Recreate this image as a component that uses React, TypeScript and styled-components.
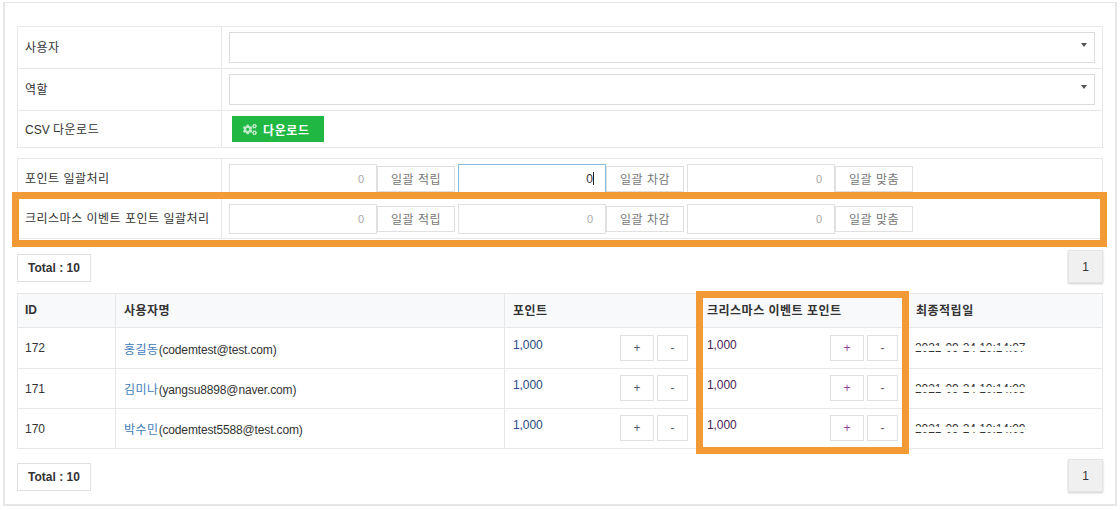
import React from "react";
import styled, { createGlobalStyle } from "styled-components";
import { FaCogs } from "react-icons/fa";

const Global = createGlobalStyle`
  * { box-sizing: border-box; }
  html, body { margin: 0; padding: 0; background: #fff; }
  body {
    font-family: "Liberation Sans", "Noto Sans CJK KR", sans-serif;
    font-size: 12px;
    color: #333;
  }
`;

const Card = styled.div`
  width: 1114px;
  height: 504px;
  margin: 2px 0 0 3px;
  padding: 23px 12px 0 12px;
  border: 2px solid #e6e6e6;
  border-width: 1px 2px 2px 2px;
  background: #fff;
`;

const Ko = styled.span`
  letter-spacing: 0.5px;
`;

const Section = styled.div`
  position: relative;
`;

const GridTable = styled.table`
  width: 1086px;
  border-collapse: collapse;
  table-layout: fixed;
  border: 1px solid #e2e2e2;
  & td, & th { border: 1px solid #e8e8e8; }
`;

const FilterTable = styled(GridTable)`
  margin-bottom: 10px;
`;

const LabelCell = styled.td<{ $height: number }>`
  width: 204px;
  height: ${(p) => p.$height}px;
  padding: 0 7px 2px;
  color: #333;
`;

const ValueCell = styled.td`
  padding: 0 7px;
`;

const SelectBox = styled.div`
  display: flex;
  justify-content: flex-end;
  align-items: center;
  height: 31px;
  padding: 0 7px 6px 0;
  border: 1px solid #dcdcdc;
  background: #fff;
`;

const Caret = styled.i`
  width: 0;
  height: 0;
  border-left: 3px solid transparent;
  border-right: 3px solid transparent;
  border-top: 4px solid #555;
`;

const DownloadButton = styled.button`
  display: flex;
  align-items: center;
  gap: 6px;
  width: 92px;
  height: 26px;
  margin: 0 0 0 3px;
  padding: 0 0 0 11px;
  border: 0;
  background: #20b843;
  color: #fff;
  font: bold 12px "Liberation Sans", "Noto Sans CJK KR", sans-serif;
  letter-spacing: 0.6px;
  & svg { width: 14px; height: 13px; color: #bfe9c9; }
`;

const BulkRow = styled.div`
  display: flex;
  align-items: center;
`;

const BulkGroup = styled.div`
  display: flex;
  align-items: center;
  margin-right: 3px;
`;

const NumberBox = styled.div<{ $focused?: boolean }>`
  display: flex;
  align-items: center;
  justify-content: flex-end;
  width: 148px;
  height: 30px;
  padding-right: ${(p) => (p.$focused ? 11 : 12)}px;
  border: 1px solid ${(p) => (p.$focused ? "#8dbbdd" : "#e0e0e0")};
  color: ${(p) => (p.$focused ? "#333" : "#aaa")};
  font-size: ${(p) => (p.$focused ? 12 : 11)}px;
`;

const TextCaret = styled.i`
  width: 1px;
  height: 13px;
  background: #222;
`;

const BulkButton = styled.button`
  width: 78px;
  height: 26px;
  padding: 0;
  border: 1px solid #e0e0e0;
  background: #fff;
  color: #777;
  font: 12px "Liberation Sans", "Noto Sans CJK KR", sans-serif;
  letter-spacing: 0.5px;
`;

const BulkHighlight = styled.div`
  position: absolute;
  left: -5px;
  top: 34px;
  width: 1095px;
  height: 55px;
  border: 7px solid #f29a36;
  pointer-events: none;
`;

const ColumnHighlight = styled.div`
  position: absolute;
  left: 679px;
  top: -2px;
  width: 213px;
  height: 163px;
  border: 7px solid #f29a36;
  pointer-events: none;
`;

const Bar = styled.div<{ $inset?: number }>`
  display: flex;
  justify-content: space-between;
  align-items: flex-start;
  width: 1086px;
  height: 54px;
  padding-top: ${(p) => p.$inset ?? 0}px;
`;

const TotalBadge = styled.div`
  display: flex;
  align-items: center;
  justify-content: center;
  width: 74px;
  height: 28px;
  margin-top: 14px;
  border: 1px solid #e0e0e0;
  font-weight: bold;
  color: #333;
`;

const PageButton = styled.button`
  width: 35px;
  height: 33px;
  margin-top: 10px;
  padding: 0;
  border: 1px solid #e4e4e4;
  background: #f0f0f0;
  box-shadow: 0 1px 2px rgba(0, 0, 0, 0.2);
  color: #333;
  font: 12px "Liberation Sans", sans-serif;
`;

const HeadCell = styled.th<{ $width?: number; $flush?: boolean }>`
  ${(p) => (p.$width ? `width: ${p.$width}px;` : "")}
  height: 34px;
  padding: 0 7px 2px ${(p) => (p.$flush ? 7 : 8)}px;
  background: #f8f9fb;
  color: #333;
  font-size: 12px;
  font-weight: bold;
  text-align: left;
`;

const Cell = styled.td<{ $inset?: number }>`
  padding: 0 7px 0 ${(p) => p.$inset ?? 7}px;
  color: #333;
`;

const Row = styled.tr`
  height: 40px;
  &:first-child { height: 41px; }
  &:first-child > td > div { padding-top: 1px; }
`;

const PointCell = styled.td<{ $end: number }>`
  padding: 0 ${(p) => p.$end}px 0 8px;
  vertical-align: top;
`;

const PointInner = styled.div`
  display: flex;
  justify-content: space-between;
  align-items: flex-start;
  padding-top: 0;
  margin-top: 6px;
`;

const Amount = styled.span<{ $event?: boolean }>`
  line-height: 20px;
  letter-spacing: -0.1px;
  color: ${(p) => (p.$event ? "#4a1a55" : "#1f4a80")};
`;

const StepGroup = styled.div`
  display: flex;
  gap: 3px;
`;

const StepButton = styled.button<{ $wide?: boolean; $event?: boolean }>`
  width: ${(p) => (p.$wide ? 34 : 31)}px;
  height: 26px;
  padding: 0;
  border: 1px solid #e0e0e0;
  background: #fff;
  color: ${(p) => (p.$event ? "#8f3fa0" : "#555a66")};
  font: 12px "Liberation Sans", sans-serif;
`;

const UserLink = styled.a`
  color: #3f7cb8;
  letter-spacing: 0.5px;
  text-decoration: none;
`;

const Email = styled.span`
  letter-spacing: -0.15px;
`;

const MaskedDate = styled.span`
  position: relative;
  display: inline-block;
  letter-spacing: -0.05px;
  &::after {
    content: "";
    position: absolute;
    left: 0;
    right: 0;
    top: 5px;
    height: 5px;
    background: #fff;
  }
`;

const bulkLabels = ["포인트 일괄처리", "크리스마스 이벤트 포인트 일괄처리"];

const users = [
  { id: 172, name: "홍길동", email: "(codemtest@test.com)", date: "2021-09-24 10:14:07" },
  { id: 171, name: "김미나", email: "(yangsu8898@naver.com)", date: "2021-09-24 10:14:08" },
  { id: 170, name: "박수민", email: "(codemtest5588@test.com)", date: "2021-09-24 10:14:09" },
];

function Points({ event }: { event?: boolean }) {
  return (
    <PointInner>
      <Amount $event={event}>1,000</Amount>
      <StepGroup>
        <StepButton $wide $event={event}>+</StepButton>
        <StepButton>-</StepButton>
      </StepGroup>
    </PointInner>
  );
}

export default function App() {
  return (
    <>
      <Global />
      <Card>
        <FilterTable>
          <tbody>
            <tr>
              <LabelCell $height={42}><Ko>사용자</Ko></LabelCell>
              <ValueCell><SelectBox><Caret /></SelectBox></ValueCell>
            </tr>
            <tr>
              <LabelCell $height={42}><Ko>역할</Ko></LabelCell>
              <ValueCell><SelectBox><Caret /></SelectBox></ValueCell>
            </tr>
            <tr>
              <LabelCell $height={37}>CSV <Ko>다운로드</Ko></LabelCell>
              <ValueCell>
                <DownloadButton><FaCogs />다운로드</DownloadButton>
              </ValueCell>
            </tr>
          </tbody>
        </FilterTable>

        <Section>
          <GridTable>
            <tbody>
              {bulkLabels.map((label, row) => (
                <tr key={label}>
                  <LabelCell $height={40}><Ko>{label}</Ko></LabelCell>
                  <ValueCell>
                    <BulkRow>
                      {["일괄 적립", "일괄 차감", "일괄 맞춤"].map((action, i) => {
                        const focused = row === 0 && i === 1;
                        return (
                          <BulkGroup key={action}>
                            <NumberBox $focused={focused}>0{focused && <TextCaret />}</NumberBox>
                            <BulkButton>{action}</BulkButton>
                          </BulkGroup>
                        );
                      })}
                    </BulkRow>
                  </ValueCell>
                </tr>
              ))}
            </tbody>
          </GridTable>
          <BulkHighlight />
        </Section>

        <Bar $inset={1}>
          <TotalBadge>Total : 10</TotalBadge>
          <PageButton>1</PageButton>
        </Bar>

        <Section>
          <GridTable>
            <thead>
              <tr>
                <HeadCell $width={98} $flush>ID</HeadCell>
                <HeadCell $width={389}><Ko>사용자명</Ko></HeadCell>
                <HeadCell $width={194}><Ko>포인트</Ko></HeadCell>
                <HeadCell $width={209}><Ko>크리스마스 이벤트 포인트</Ko></HeadCell>
                <HeadCell><Ko>최종적립일</Ko></HeadCell>
              </tr>
            </thead>
            <tbody>
              {users.map((u) => (
                <Row key={u.id}>
                  <Cell>{u.id}</Cell>
                  <Cell $inset={8}><UserLink href="#">{u.name}</UserLink><Email>{u.email}</Email></Cell>
                  <PointCell $end={10}><Points /></PointCell>
                  <PointCell $end={9}><Points event /></PointCell>
                  <Cell><MaskedDate>{u.date}</MaskedDate></Cell>
                </Row>
              ))}
            </tbody>
          </GridTable>
          <ColumnHighlight />
        </Section>

        <Bar>
          <TotalBadge>Total : 10</TotalBadge>
          <PageButton>1</PageButton>
        </Bar>
      </Card>
    </>
  );
}
